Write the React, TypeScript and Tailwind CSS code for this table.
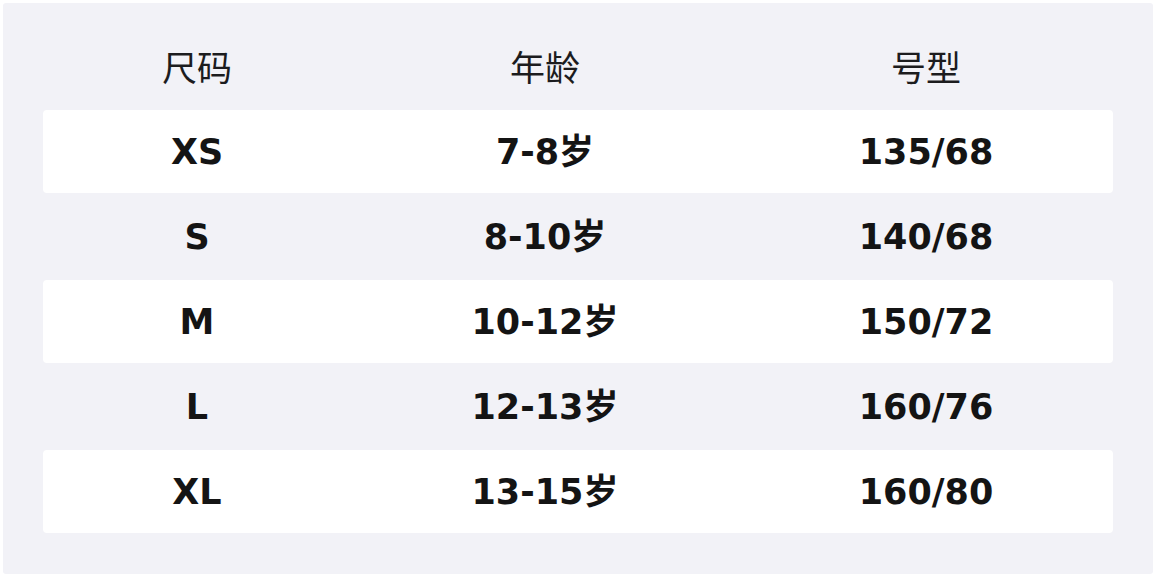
import React from "react";

const rows = [
  ["XS", "7-8岁", "135/68"],
  ["S", "8-10岁", "140/68"],
  ["M", "10-12岁", "150/72"],
  ["L", "12-13岁", "160/76"],
  ["XL", "13-15岁", "160/80"],
];

export default function App() {
  return (
    <div className="w-[1156px] h-[578px] bg-white p-[3px]">
      <div className="w-[1150px] h-[571px] bg-[#f2f2f7] rounded-[3px] px-[40px] pt-[20px]">
        <div
          className="grid grid-cols-[308px_388px_374px] h-[87px] items-center text-[35px] text-[#1c1c1e]"
          style={{ fontFamily: '"Noto Sans CJK SC", "Noto Sans", sans-serif' }}
        >
          <div className="text-center">尺码</div>
          <div className="text-center">年龄</div>
          <div className="text-center">号型</div>
        </div>
        <div className="flex flex-col gap-[2px]">
          {rows.map((r, i) => (
            <div
              key={i}
              className={`grid grid-cols-[308px_388px_374px] h-[83px] items-center rounded-[4px] text-[35px] font-bold text-[#141414] ${
                i % 2 === 0 ? "bg-white" : ""
              }`}
              style={{ fontFamily: '"DejaVu Sans", "Noto Sans CJK SC", sans-serif' }}
            >
              {r.map((c, j) => (
                <div key={j} className="text-center leading-none pt-[2px]">
                  {c}
                </div>
              ))}
            </div>
          ))}
        </div>
      </div>
    </div>
  );
}
